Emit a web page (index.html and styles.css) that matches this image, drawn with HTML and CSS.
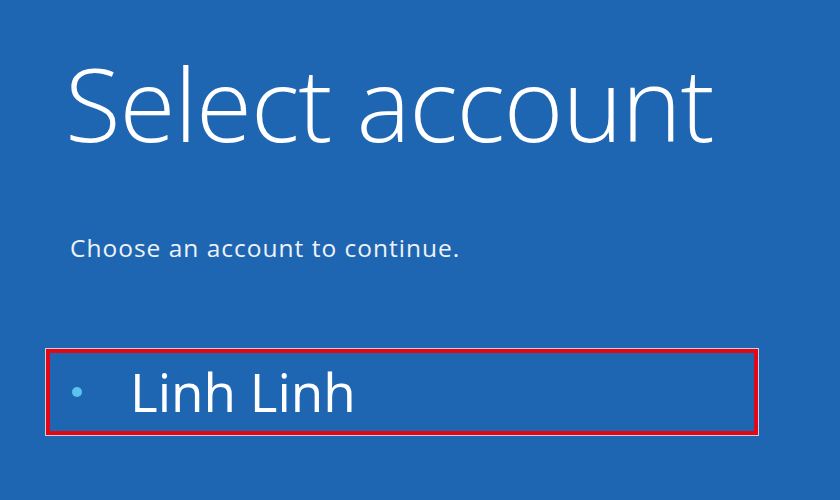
FILE: index.html
```html
<!DOCTYPE html>
<html>
<head>
<meta charset="utf-8">
<link rel="stylesheet" href="styles.css">
</head>
<body>
<main class="screen">
  <h1 class="title">Select account</h1>
  <p class="subtitle">Choose an account to continue.</p>
  <div class="account">
    <span class="dot"></span>
    <span class="name">Linh Linh</span>
  </div>
</main>
</body>
</html>
```
FILE: styles.css
```css
html, body {
  margin: 0;
  padding: 0;
  width: 840px;
  height: 500px;
  overflow: hidden;
  background: #1f66b2;
}
.screen {
  display: flex;
  flex-direction: column;
  padding: 43px 0 0 46px;
  font-family: "Open Sans", "Segoe UI", sans-serif;
  color: #ffffff;
}
.title {
  margin: 0 0 0 19px;
  font-weight: 300;
  font-size: 102px;
  line-height: 120px;
  letter-spacing: -1.2px;
}
.subtitle {
  margin: 70px 0 0 24px;
  font-size: 24.5px;
  line-height: 30px;
  letter-spacing: 1px;
  color: #eef2f8;
}
.account {
  margin-top: 86px;
  width: 704px;
  height: 78px;
  border: 4px solid #e30613;
  outline: 1px solid #c8cfe2;
  display: flex;
  align-items: center;
  box-sizing: content-box;
}
.dot {
  width: 10px;
  height: 10px;
  border-radius: 50%;
  background: #5cc3f0;
  margin-left: 22px;
}
.name {
  margin-left: 48px;
  font-size: 53px;
  line-height: 60px;
}
```
